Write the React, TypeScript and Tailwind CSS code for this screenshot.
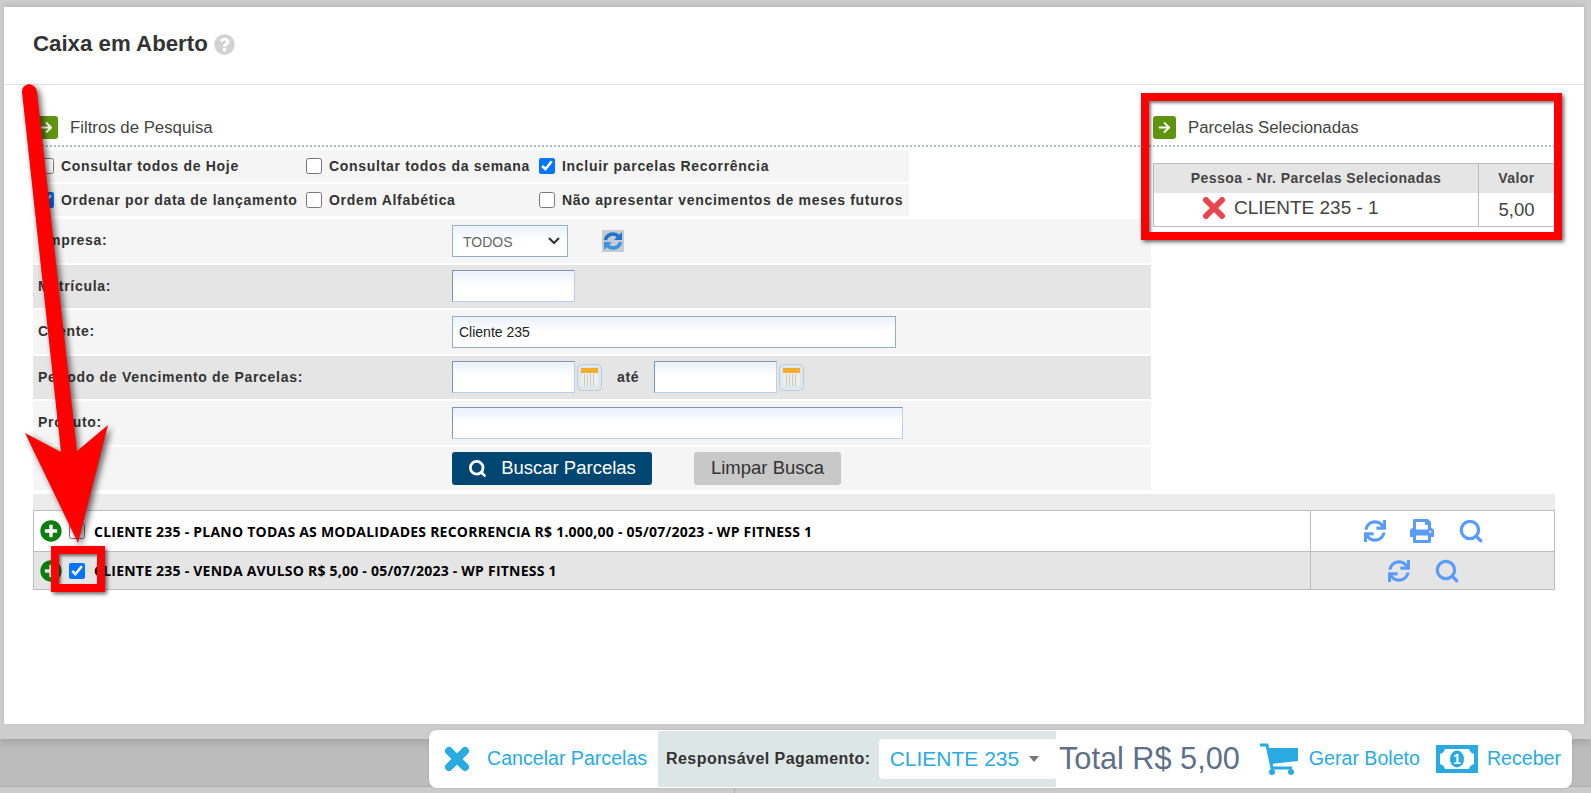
import { Search } from 'lucide-react'
import { FaArrowRight, FaPlusCircle, FaPrint, FaQuestionCircle, FaSync } from 'react-icons/fa'

const labelClass = "text-[14px] font-bold tracking-[0.7px] text-[#333]"
const inputClass = "h-8 border border-[#b8d0ee] border-l-[#8094b8] border-t-[#8094b8] bg-gradient-to-b from-[#eef4fd] from-10% to-white to-50% px-1.5 text-[14px] text-[#222] outline-none"
const tealInputClass = "h-8 border border-[#8fb3c4] bg-gradient-to-b from-[#eef4fd] from-10% to-white to-50% px-1.5 text-[14px] text-[#222] outline-none"

function SectionTitle({ title }: { title: string }) {
  return (
    <div className="flex h-[62px] items-end border-b-2 border-dotted border-[#aebccb] pb-[5px]">
      <div className="flex items-center gap-[12px]">
        <span className="flex h-[23px] w-[23px] items-center justify-center rounded-[3px] bg-[#5f9410] text-white">
          <FaArrowRight className="h-[13px] w-[13px]" />
        </span>
        <span className="text-[16.8px] text-[#444]">{title}</span>
      </div>
    </div>
  )
}

function Check({ label, checked, className }: { label: string; checked?: boolean; className: string }) {
  return (
    <label className={`flex items-center gap-[7px] ${className}`}>
      <input type="checkbox" defaultChecked={checked} className="h-4 w-4 accent-[#0075ff]" />
      <span className={labelClass}>{label}</span>
    </label>
  )
}

function FormRow({ label, shade, children }: { label: string; shade?: boolean; children?: React.ReactNode }) {
  return (
    <div className={`flex h-[43.5px] items-center ${shade ? 'bg-[#e5e5e5]' : 'bg-[#f5f5f5]'}`}>
      <span className={`w-[419px] pl-[5px] ${labelClass}`}>{label}</span>
      {children}
    </div>
  )
}

function CalendarIcon() {
  return (
    <svg width="25" height="27" viewBox="0 0 25 27" className="ml-[2px] shrink-0">
      <rect x="0.5" y="0.5" width="24" height="26" rx="4" fill="#dfe7ee" stroke="#bccbd8" />
      <rect x="4" y="4" width="17" height="5" fill="#f2ac2e" />
      <rect x="4" y="9" width="17" height="13" fill="#eeeeea" />
      <path d="M7.500 10v12M10.500 10v12M13.500 10v12M16.500 10v12" stroke="#c9c9c4" />
    </svg>
  )
}

function RefreshImage() {
  return (
    <svg width="22" height="22" viewBox="0 0 22 22" className="ml-[34px]">
      <rect width="22" height="22" fill="#c4cbd1" />
      <path d="M3.500 10a7.500 7.500 0 0 1 13-3.500" fill="none" stroke="#1f74c9" strokeWidth="3.500" />
      <path d="M20 2v8h-8z" fill="#1f74c9" />
      <path d="M18.500 12a7.500 7.500 0 0 1-13 3.500" fill="none" stroke="#3b93e3" strokeWidth="3.500" />
      <path d="M2 20v-8h8z" fill="#3b93e3" />
    </svg>
  )
}

function CartIcon() {
  return (
    <svg width="38" height="32" viewBox="0 0 38 32" className="shrink-0">
      <path d="M0 2h7l5 23h20" fill="none" stroke="currentColor" strokeWidth="3" />
      <path d="M7 5h31v13L11 21z" fill="currentColor" />
      <circle cx="12" cy="29" r="3" fill="currentColor" />
      <circle cx="31" cy="29" r="3" fill="currentColor" />
    </svg>
  )
}

function MoneyIcon() {
  return (
    <svg width="42" height="28" viewBox="0 0 42 28" className="ml-[16px] shrink-0">
      <rect width="42" height="28" fill="currentColor" />
      <path d="M9 4h24q1 4 5 5v10q-4 1-5 5H9q-1-4-5-5V9q4-1 5-5z" fill="white" />
      <ellipse cx="21" cy="14" rx="7" ry="8.500" fill="currentColor" />
      <text x="21" y="19" textAnchor="middle" fontSize="14" fontWeight="700" fill="white">1</text>
    </svg>
  )
}

function ParcelaRow({ text, shade, print, checked, heightClass }: { text: string; shade?: boolean; print?: boolean; checked?: boolean; heightClass: string }) {
  return (
    <div className={`flex border-b border-[#bdbdbd] ${heightClass} ${shade ? 'bg-[#e5e5e5]' : 'bg-white'}`}>
      <div className="flex flex-1 items-center border-r border-[#bdbdbd] pl-[6px]">
        <FaPlusCircle className="h-[22px] w-[22px] text-[#0b7d0b]" />
        <input type="checkbox" defaultChecked={checked} className="ml-[7px] h-4 w-4 accent-[#0075ff]" />
        <span className="ml-[9px] font-['Open_Sans',sans-serif] text-[14px] font-bold tracking-[0.23px] text-black">{text}</span>
      </div>
      <div className="flex w-[243px] items-center justify-center gap-[24px] pr-[18px] text-[#5a9bff]">
        <FaSync className="h-[22px] w-[22px]" />
        {print && <FaPrint className="h-[24px] w-[24px]" />}
        <Search size={26} strokeWidth={3} />
      </div>
    </div>
  )
}

function Annotations() {
  return (
    <>
      <div className="absolute left-[1141px] top-[93px] h-[147px] w-[421px] border-[8px] border-[#ff0000] shadow-[2px_2px_4px_rgba(0,0,0,0.6),inset_2px_2px_3px_rgba(0,0,0,0.5)]" />
      <div className="absolute left-[51px] top-[546px] h-[46px] w-[54px] border-[8px] border-[#ff0000] shadow-[2px_2px_4px_rgba(0,0,0,0.6),inset_2px_2px_3px_rgba(0,0,0,0.5)]" />
      <svg width="130" height="470" viewBox="0 0 130 470" className="absolute left-0 top-[80px] drop-shadow-[3px_3px_3px_rgba(0,0,0,0.6)]">
        <path
          d="M22 12 Q22 5 29 4 Q36 5 37 12 L77 371 L108 345 L78 463 L25 353 L61 372 Z"
          fill="#ff0000"
        />
      </svg>
    </>
  )
}

export default function App() {
  return (
    <div className="relative flex h-[793px] w-[1591px] flex-col overflow-hidden bg-[#bcbcbc] font-['Liberation_Sans',Arial,sans-serif]">
      <div className="relative h-[739px] shrink-0 bg-[#cdcdcd] pl-[4px] pr-[7px] pt-[7px] shadow-[0_4px_7px_rgba(0,0,0,0.12)]">
        <div className="h-[717px] bg-white shadow-[0_-2px_5px_rgba(0,0,0,0.1)]">
          <div className="flex h-[78px] items-center gap-[6px] border-b border-[#e3e3e3] pb-[3px] pl-[29px]">
            <h1 className="text-[22.25px] font-bold text-[#333]">Caixa em Aberto</h1>
            <FaQuestionCircle className="h-[21px] w-[21px] text-[#d2d2d2]" />
          </div>

          <div className="flex pl-[29px] pr-[29px]">
            <div className="w-[1118px]">
              <div className="pl-[2px]">
                <SectionTitle title="Filtros de Pesquisa" />
              </div>
              <div className="mt-[3px] flex w-[876px] flex-col gap-[2px]">
                <div className="flex h-[32px] items-center bg-[#f5f5f5] pl-[5px]">
                  <Check label="Consultar todos de Hoje" className="w-[268px]" />
                  <Check label="Consultar todos da semana" className="w-[233px]" />
                  <Check label="Incluir parcelas Recorrência" checked className="" />
                </div>
                <div className="flex h-[32px] items-center bg-[#f5f5f5] pl-[5px]">
                  <Check label="Ordenar por data de lançamento" checked className="w-[268px]" />
                  <Check label="Ordem Alfabética" className="w-[233px]" />
                  <Check label="Não apresentar vencimentos de meses futuros" className="" />
                </div>
              </div>
              <div className="mt-[3px] flex flex-col gap-[2px]">
                <FormRow label="Empresa:">
                  <div className={`${tealInputClass} flex w-[116px] items-center justify-between !pl-[10px] !pr-[7px]`}>
                    <span className="pt-[3px] text-[14px] text-[#666]">TODOS</span>
                    <svg width="12" height="8" viewBox="0 0 12 8"><path d="M1 1l5 5 5-5" fill="none" stroke="#333" strokeWidth="2" /></svg>
                  </div>
                  <RefreshImage />
                </FormRow>
                <FormRow label="Matrícula:" shade>
                  <input className={`${inputClass} w-[123px]`} />
                </FormRow>
                <FormRow label="Cliente:">
                  <input className={`${tealInputClass} w-[444px]`} defaultValue="Cliente 235" />
                </FormRow>
                <FormRow label="Período de Vencimento de Parcelas:" shade>
                  <input className={`${inputClass} w-[123px]`} />
                  <CalendarIcon />
                  <span className={`ml-[15px] w-[37px] ${labelClass}`}>até</span>
                  <input className={`${inputClass} w-[123px]`} />
                  <CalendarIcon />
                </FormRow>
                <FormRow label="Produto:">
                  <input className={`${inputClass} w-[451px]`} />
                </FormRow>
                <FormRow label="">
                  <button className="flex h-[33px] w-[200px] items-center justify-center gap-[14px] rounded-[3px] bg-[#004672] text-[18.5px] text-white">
                    <Search size={19} strokeWidth={3.5} />
                    Buscar Parcelas
                  </button>
                  <button className="ml-[42px] h-[33px] w-[147px] rounded-[3px] bg-[#c8c8c8] text-[18.5px] text-[#333]">Limpar Busca</button>
                </FormRow>
              </div>
            </div>

            <div className="w-[404px] pl-[2px]">
              <SectionTitle title="Parcelas Selecionadas" />
              <div className="mt-[16px] flex flex-col border border-[#bdbdbd]">
                <div className="flex h-[29px] items-center bg-[#e5e5e5] text-[14px] font-bold tracking-[0.45px] text-[#444]">
                  <span className="w-[325px] border-r border-[#bdbdbd] text-center leading-[29px]">Pessoa - Nr. Parcelas Selecionadas</span>
                  <span className="flex-1 text-center">Valor</span>
                </div>
                <div className="flex h-[33px] items-center text-[#444]">
                  <span className="flex h-full w-[325px] items-center gap-[8px] border-r border-[#bdbdbd] pb-[3px] pl-[48px] text-[19px]">
                    <svg width="24" height="22" viewBox="0 0 24 22">
                      <path d="M4 3 20 19M20 3 4 19" fill="none" stroke="#e8454c" strokeWidth="6" strokeLinecap="round" />
                    </svg>
                    CLIENTE 235 - 1
                  </span>
                  <span className="flex-1 text-center text-[18.5px]">5,00</span>
                </div>
              </div>
            </div>
          </div>

          <div className="mx-[29px] mt-[4px] h-[16px] bg-[#ececec]" />
          <div className="mx-[29px] border-x border-t border-[#bdbdbd]">
            <ParcelaRow text="CLIENTE 235 - PLANO TODAS AS MODALIDADES RECORRENCIA R$ 1.000,00 - 05/07/2023 - WP FITNESS 1" print heightClass="h-[41px]" />
            <ParcelaRow text="CLIENTE 235 - VENDA AVULSO R$ 5,00 - 05/07/2023 - WP FITNESS 1" shade checked heightClass="h-[38px]" />
          </div>
        </div>
      </div>

      <div className="flex-1" />
      <div className="flex h-[7px] shrink-0 border-t border-[#aeaeae] bg-[#cbcbcb]">
        <div className="w-[735px] border-r border-[#aeaeae]" />
      </div>

      <div className="absolute bottom-[5px] left-[429px] flex h-[58px] w-[1143px] items-center rounded-[8px] bg-white shadow-[0_0_3px_rgba(0,0,0,0.1)]">
        <div className="flex w-[229px] items-center pl-[14px] text-[#29abe2]">
          <svg width="28" height="28" viewBox="0 0 28 28" className="shrink-0">
            <path d="M6 6 22 22M22 6 6 22" fill="none" stroke="currentColor" strokeWidth="8" strokeLinecap="round" />
          </svg>
          <span className="ml-[16px] whitespace-nowrap text-[19.6px]">Cancelar Parcelas</span>
        </div>
        <div className="flex h-[56px] w-[398px] items-center bg-[#dde6e7] pl-[8px]">
          <span className="whitespace-nowrap text-[16px] font-bold tracking-[0.45px] text-[#333]">Responsável Pagamento:</span>
          <div className="ml-[8px] flex h-[40px] w-[178px] shrink-0 items-center rounded-[4px] bg-white pl-[11px] text-[21px] text-[#29abe2]">
            CLIENTE 235
            <span className="ml-[10px] h-0 w-0 border-x-[5px] border-t-[6px] border-x-transparent border-t-[#777]" />
          </div>
        </div>
        <span className="ml-[3px] whitespace-nowrap text-[30.7px] text-[#5f6f8a]">Total R$ 5,00</span>
        <div className="ml-[20px] flex items-center whitespace-nowrap text-[19.6px] text-[#29abe2]">
          <CartIcon />
          <span className="ml-[11px]">Gerar Boleto</span>
          <MoneyIcon />
          <span className="ml-[9px]">Receber</span>
        </div>
      </div>

      <Annotations />
    </div>
  )
}
